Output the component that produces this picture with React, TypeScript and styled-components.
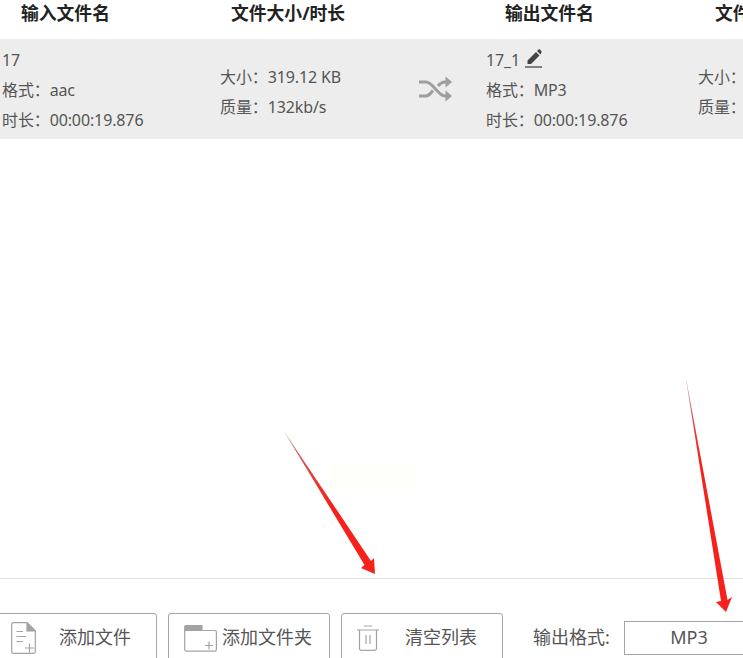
import React from 'react';
import styled, { createGlobalStyle } from 'styled-components';

const GlobalStyle = createGlobalStyle`
  html, body {
    margin: 0;
    padding: 0;
    background: #ffffff;
  }
`;

const Page = styled.div`
  position: relative;
  width: 743px;
  height: 658px;
  overflow: hidden;
  display: flex;
  flex-direction: column;
  background: #ffffff;
  color: #555555;
  font-family: 'Noto Sans', 'Noto Sans CJK SC', sans-serif;
  font-size: 16px;
`;

const HeaderRow = styled.div`
  display: grid;
  grid-template-columns: 210px 274px 210px 1fr;
  height: 39px;
  flex: none;
  padding-left: 21px;
  box-sizing: border-box;
  white-space: nowrap;
`;

const HeaderCell = styled.div`
  font-size: 17.8px;
  font-weight: 700;
  line-height: 27px;
  color: #222222;
`;

const FileRow = styled.div`
  display: grid;
  grid-template-columns: 218px 199px 67px 212px 1fr;
  align-items: center;
  height: 100px;
  flex: none;
  padding-left: 2px;
  box-sizing: border-box;
  background: #ededed;
  white-space: nowrap;
`;

const InfoCell = styled.div<{ $drop: number }>`
  display: flex;
  flex-direction: column;
  gap: 8px;
  margin-top: ${(props) => props.$drop}px;
`;

const InfoLine = styled.div`
  display: flex;
  align-items: center;
  height: 22px;
  line-height: 22px;
  letter-spacing: -0.12px;
`;

const PenIcon = styled.svg`
  width: 18px;
  height: 19px;
  margin-left: 5px;
  margin-top: -3px;
  color: #444444;
`;

const ShuffleIcon = styled.svg`
  display: block;
  width: 34px;
  height: 26px;
  color: #9e9e9e;
`;

const ListArea = styled.div`
  flex: 1;
`;

const Footer = styled.div`
  flex: none;
  height: 80px;
  box-sizing: border-box;
  border-top: 1px solid #e2e2e2;
  padding-top: 34px;
  display: flex;
  align-items: flex-start;
  gap: 11px;
  margin-left: -5px;
  white-space: nowrap;
`;

const ToolButton = styled.div`
  flex: none;
  width: 162px;
  height: 50px;
  box-sizing: border-box;
  display: flex;
  align-items: center;
  padding-left: 15px;
  border: 1px solid #a6a6a6;
  border-radius: 3px;
  font-size: 18px;
  line-height: 24px;
  color: #555555;
`;

const IconSlot = styled.div<{ $width: number }>`
  flex: none;
  width: ${(props) => props.$width}px;
  display: flex;
  align-items: center;
`;

const ButtonLabel = styled.span`
  margin-top: -2px;
`;

const FormatLabel = styled.div`
  flex: none;
  margin-left: 19px;
  margin-top: 11px;
  width: 80px;
  font-size: 18px;
  line-height: 26px;
`;

const FormatSelect = styled.div`
  flex: none;
  width: 130px;
  height: 34px;
  margin-top: 8px;
  box-sizing: border-box;
  border: 1px solid #a6a6a6;
  text-align: center;
  font-size: 18px;
  line-height: 31px;
  color: #555555;
`;

const Overlay = styled.svg`
  position: absolute;
  left: 0;
  top: 0;
  width: 743px;
  height: 658px;
  pointer-events: none;
`;

const FaintPatch = styled.div`
  position: absolute;
  left: 330px;
  top: 463px;
  width: 86px;
  height: 27px;
  background: #fffffa;
`;

const FileIcon = () => (
  <svg width="25" height="32" viewBox="0 0 25 32" fill="none" stroke="#a3a3a3" strokeWidth="1.2">
    <path d="M2.5 .7H16L24.3 9V29.5a1.8 1.8 0 0 1-1.8 1.8H2.5a1.8 1.8 0 0 1-1.8-1.8V2.5a1.8 1.8 0 0 1 1.8-1.8Z" />
    <path d="M16 .7L24.3 9H16Z" fill="#a3a3a3" />
    <path d="M5.5 9.5H12M5.5 14.5H15M5.5 19.5H12M14 26H23M18.5 21.5V30.5" />
  </svg>
);

const FolderIcon = () => (
  <svg width="33" height="27" viewBox="0 0 33 27" fill="none" stroke="#a3a3a3" strokeWidth="1.2">
    <path d="M.7 2A1.4 1.4 0 0 1 2 .7H18V5.5H.7Z" fill="#a3a3a3" />
    <path d="M.7 5.5H31a1.4 1.4 0 0 1 1.4 1.4V24.6A1.6 1.6 0 0 1 30.8 26.2H2.3A1.6 1.6 0 0 1 .7 24.6Z" />
    <path d="M21 20.5H29M25 16.5V24.5" />
  </svg>
);

const TrashIcon = () => (
  <svg width="22" height="26" viewBox="0 0 22 26" fill="none" stroke="#a3a3a3" strokeWidth="1.2">
    <path d="M0 5H22M7 1H15M2.5 5V23.5A1.8 1.8 0 0 0 4.3 25.3H17.7A1.8 1.8 0 0 0 19.5 23.5V5M9 10V19M13 10V19" />
  </svg>
);

export default function App() {
  return (
    <Page>
      <GlobalStyle />
      <HeaderRow>
        <HeaderCell>输入文件名</HeaderCell>
        <HeaderCell>文件大小/时长</HeaderCell>
        <HeaderCell>输出文件名</HeaderCell>
        <HeaderCell>文件大小/时长</HeaderCell>
      </HeaderRow>
      <FileRow>
        <InfoCell $drop={2}>
          <InfoLine>17</InfoLine>
          <InfoLine>{'格式\uFF1Aaac'}</InfoLine>
          <InfoLine>{'时长\uFF1A00:00:19.876'}</InfoLine>
        </InfoCell>
        <InfoCell $drop={6}>
          <InfoLine>{'大小\uFF1A319.12 KB'}</InfoLine>
          <InfoLine>{'质量\uFF1A132kb/s'}</InfoLine>
        </InfoCell>
        <ShuffleIcon viewBox="0 0 34 26" fill="none" stroke="currentColor" strokeWidth="3">
          <path d="M0 6H7C14 6 19 20 26 20H31" />
          <path d="M0 20H7C10 20 12 17 14 14.5M19 10C21 7.5 23 6 26 6H31" />
          <path d="M26.5 .5L33 6L26.5 11.5M26.5 14.5L33 20L26.5 25.5" fill="currentColor" stroke="none" />
        </ShuffleIcon>
        <InfoCell $drop={2}>
          <InfoLine>
            17_1
            <PenIcon viewBox="0 0 18 19">
              <path d="M2.5 11.5L11 3L14.5 6.5L6 15H2.5Z M12 2L13.6 .6C14 .2 14.6 .2 15 .6L16.4 2.2C16.8 2.6 16.8 3.2 16.4 3.6L15.5 5.5Z" fill="currentColor" />
              <path d="M0 18H17" stroke="currentColor" strokeWidth="1.3" />
            </PenIcon>
          </InfoLine>
          <InfoLine>{'格式\uFF1AMP3'}</InfoLine>
          <InfoLine>{'时长\uFF1A00:00:19.876'}</InfoLine>
        </InfoCell>
        <InfoCell $drop={6}>
          <InfoLine>{'大小\uFF1A319.12 KB'}</InfoLine>
          <InfoLine>{'质量\uFF1A132kb/s'}</InfoLine>
        </InfoCell>
      </FileRow>
      <ListArea />
      <Footer>
        <ToolButton>
          <IconSlot $width={48}>
            <FileIcon />
          </IconSlot>
          <ButtonLabel>添加文件</ButtonLabel>
        </ToolButton>
        <ToolButton>
          <IconSlot $width={38}>
            <FolderIcon />
          </IconSlot>
          <ButtonLabel>添加文件夹</ButtonLabel>
        </ToolButton>
        <ToolButton>
          <IconSlot $width={48}>
            <TrashIcon />
          </IconSlot>
          <ButtonLabel>清空列表</ButtonLabel>
        </ToolButton>
        <FormatLabel>输出格式:</FormatLabel>
        <FormatSelect>MP3</FormatSelect>
      </Footer>
      <FaintPatch />
      <Overlay viewBox="0 0 743 658">
        <defs>
          <linearGradient id="arrowOne" gradientUnits="userSpaceOnUse" x1="284" y1="431" x2="330" y2="505">
            <stop offset="0" stopColor="#c07878" />
            <stop offset="1" stopColor="#f5211a" />
          </linearGradient>
          <linearGradient id="arrowTwo" gradientUnits="userSpaceOnUse" x1="686" y1="377" x2="700" y2="460">
            <stop offset="0" stopColor="#c07878" />
            <stop offset="1" stopColor="#f5211a" />
          </linearGradient>
        </defs>
        <polygon points="283.5,430.5 371,561 374,558 375,574 361,568 364.5,565" fill="url(#arrowOne)" />
        <polygon points="685.5,376 727.5,600 732,597 726,612 716,602 721,601" fill="url(#arrowTwo)" />
      </Overlay>
    </Page>
  );
}
